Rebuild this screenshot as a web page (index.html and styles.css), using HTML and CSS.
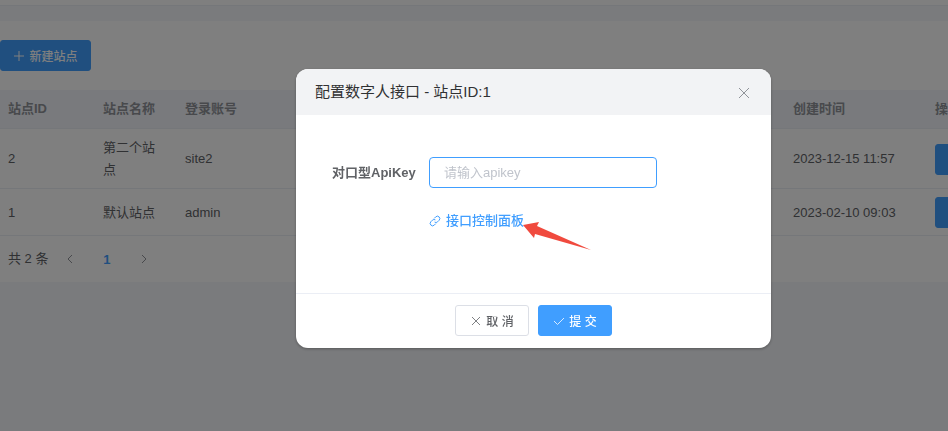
FILE: index.html
```
<!DOCTYPE html>
<html lang="zh-CN">
<head>
    <meta charset="UTF-8">
    <title>站点管理</title>
    <link rel="stylesheet" href="styles.css">
</head>
<body>
<div class="topbar"></div>

<main class="card">
    <div class="toolbar">
        <button type="button" class="btn btn-primary btn-add">
            <svg class="icon" viewBox="0 0 12 12"><path d="M6 1v10M1 6h10"/></svg>
            <span>新建站点</span>
        </button>
    </div>
    <table class="site-table">
        <colgroup>
            <col class="col-id">
            <col class="col-name">
            <col>
            <col class="col-time">
            <col class="col-action">
        </colgroup>
        <thead>
            <tr><th>站点ID</th><th>站点名称</th><th>登录账号</th><th>创建时间</th><th>操作</th></tr>
        </thead>
        <tbody>
            <tr>
                <td>2</td><td>第二个站点</td><td>site2</td><td>2023-12-15 11:57</td>
                <td><button type="button" class="btn btn-primary" aria-label="action"></button></td>
            </tr>
            <tr>
                <td>1</td><td>默认站点</td><td>admin</td><td>2023-02-10 09:03</td>
                <td><button type="button" class="btn btn-primary" aria-label="action"></button></td>
            </tr>
        </tbody>
    </table>
    <div class="pagination">
        <span>共 2 条</span>
        <button type="button" class="page" aria-label="prev"><svg class="icon" viewBox="0 0 12 12"><path d="M8 2L4 6l4 4"/></svg></button>
        <button type="button" class="page active">1</button>
        <button type="button" class="page" aria-label="next"><svg class="icon" viewBox="0 0 12 12"><path d="M4 2l4 4-4 4"/></svg></button>
    </div>
</main>

<div class="overlay">
    <form class="dialog" role="dialog" aria-labelledby="title">
        <div class="dialog-header">
            <span id="title">配置数字人接口 - 站点ID:1</span>
            <button type="button" class="close" aria-label="close"><svg viewBox="0 0 12 12"><path d="M1 1l10 10M11 1L1 11"/></svg></button>
        </div>
        <div class="dialog-body">
            <div class="form-item">
                <label for="apikey">对口型ApiKey</label>
                <input type="text" id="apikey" placeholder="请输入apikey">
            </div>
            <div class="form-link">
                <a href="#">
                    <svg class="icon" viewBox="0 0 12 12"><path d="M5.2 3.4l1.5-1.5a2.4 2.4 0 0 1 3.4 3.4L8.6 6.8a2.4 2.4 0 0 1-3 .3M6.8 8.6l-1.5 1.5a2.4 2.4 0 0 1-3.4-3.4l1.5-1.5a2.4 2.4 0 0 1 3-.3"/></svg>
                    <span>接口控制面板</span>
                </a>
                <svg class="arrow" viewBox="0 0 70 29"><path d="M1 4L17 1l-2 4 54 24-56-16-1 4z"/></svg>
            </div>
        </div>
        <div class="dialog-footer">
            <button type="button" class="btn">
                <svg class="icon" viewBox="0 0 12 12"><path d="M2 2l8 8M10 2l-8 8"/></svg>
                <span>取 消</span>
            </button>
            <button type="submit" class="btn btn-primary">
                <svg class="icon" viewBox="0 0 12 12"><path d="M1 6l3.5 3.5L11 3"/></svg>
                <span>提 交</span>
            </button>
        </div>
    </form>
</div>
</body>
</html>
```
FILE: styles.css
```
* {
    box-sizing: border-box;
}

body {
    margin: 0;
    min-height: 100vh;
    overflow: hidden;
    background: #f5f7fa;
    color: #606266;
    font: 13px/22px "Liberation Sans", "Noto Sans CJK SC", sans-serif;
}

button, input {
    font-family: inherit;
}

svg {
    fill: none;
    stroke: currentColor;
}

.icon {
    width: 12px;
    height: 12px;
    flex: none;
}

.topbar {
    height: 6px;
    background: #fff;
    border-bottom: 1px solid #ebeef5;
}

.card {
    margin-top: 15px;
    background: #fff;
    overflow: hidden;
}

.toolbar {
    padding: 19px 0;
}

.btn {
    display: inline-flex;
    align-items: center;
    justify-content: center;
    gap: 4px;
    min-width: 74px;
    height: 31px;
    padding: 0 12px;
    border: 1px solid #dcdfe6;
    border-radius: 3px;
    background: #fff;
    color: #606266;
    font-size: 12px;
    font-weight: 500;
    white-space: nowrap;
    vertical-align: top;
}

.btn-primary {
    background: #409eff;
    border-color: #409eff;
    color: #fff;
}

.btn-add {
    width: 91px;
}

/* table */
.site-table {
    width: 100%;
    table-layout: fixed;
    border-collapse: separate;
    border-spacing: 0;
}

.col-id { width: 95px; }
.col-name { width: 82px; }
.col-time { width: 142px; }
.col-action { width: 21px; }

th, td {
    padding: 8px;
    border-bottom: 1px solid #ebeef5;
    text-align: left;
}

th {
    background: #f2f5fa;
    color: #909399;
    font-weight: 700;
    white-space: nowrap;
}

td {
    height: 47px;
    padding: 8px 12px 7px 8px;
}

th:last-child, td:last-child {
    padding-right: 0;
    overflow: hidden;
}

.pagination {
    display: flex;
    align-items: center;
    height: 46px;
    padding-left: 8px;
}

.page {
    display: flex;
    align-items: center;
    justify-content: center;
    width: 37px;
    height: 28px;
    padding: 0 8px;
    border: 0;
    background: none;
    color: #909399;
    font-size: 13px;
}

.pagination span {
    margin-right: 3px;
}

.page.active {
    color: #409eff;
    font-weight: 700;
}

/* dialog */
.overlay {
    position: fixed;
    inset: 0;
    background: rgba(0, 0, 0, .5);
}

.dialog {
    margin: 69px 177px 0 296px;
    border-radius: 12px;
    background: #fff;
    box-shadow: 0 1px 3px rgba(0, 0, 0, .3);
    overflow: hidden;
}

.dialog-header {
    display: flex;
    align-items: center;
    justify-content: space-between;
    height: 46px;
    padding: 0 19px;
    background: #f2f3f5;
    color: #303133;
    font-size: 15px;
}

.close {
    display: flex;
    padding: 4px 2px 2px;
    border: 0;
    background: none;
    color: #909399;
}

.close svg {
    width: 12px;
    height: 12px;
}

.dialog-body {
    height: 178px;
    padding: 42px 20px 0 36px;
}

.form-item {
    display: flex;
    align-items: center;
}

.form-item label {
    width: 97px;
    font-weight: 700;
}

.form-item input {
    width: 228px;
    height: 31px;
    padding: 0 14px;
    border: 1px solid #409eff;
    border-radius: 4px;
    outline: 0;
    font-size: 13px;
}

.form-item input::placeholder {
    color: #c0c4cc;
}

.form-link {
    position: relative;
    margin: 22px 0 0 97px;
}

.form-link a {
    display: inline-flex;
    align-items: center;
    gap: 5px;
    color: #409eff;
    font-weight: 500;
    text-decoration: none;
}

.arrow {
    position: absolute;
    left: 93px;
    top: 11px;
    width: 70px;
    height: 29px;
    fill: #f04a3e;
    stroke: none;
}

.dialog-footer {
    display: flex;
    justify-content: center;
    gap: 9px;
    padding: 11px 0 12px;
    border-top: 1px solid #ebeef5;
}

.dialog-footer .icon {
    opacity: .8;
}
```
